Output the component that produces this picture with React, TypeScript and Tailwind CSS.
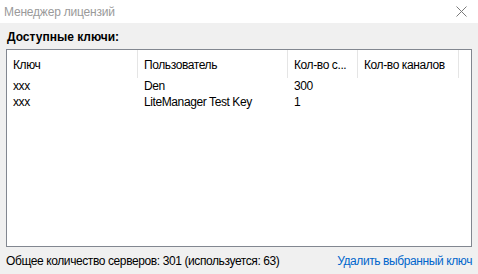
const columns = [
  { title: 'Ключ', width: 'w-[131px]' },
  { title: 'Пользователь', width: 'w-[150px]' },
  { title: 'Кол-во с...', width: 'w-[70px]' },
  { title: 'Кол-во каналов', width: 'w-[101px]' },
]

const rows = [
  ['xxx', 'Den', '300', ''],
  ['xxx', 'LiteManager Test Key', '1', ''],
]

const widths = ['w-[131px]', 'w-[150px]', 'w-[70px]', 'w-[101px]']

const App = () => {
  return (
    <div className="flex h-[274px] w-[478px] flex-col bg-[#f0f0f0] text-[12px] tracking-[-0.4px] text-black [font-family:'Liberation_Sans','Noto_Sans',sans-serif]">
      <div className="flex h-[23px] items-center justify-between bg-white pl-[4px] pr-[11px]">
        <span className="text-[12px] tracking-[-0.2px] text-[#9a9a9a]">Менеджер лицензий</span>
        <svg width="11" height="11" viewBox="0 0 11 11" className="text-[#7a7a7a]">
          <path d="M0.5 0.5 L10.5 10.5 M10.5 0.5 L0.5 10.5" stroke="currentColor" strokeWidth="1" />
        </svg>
      </div>
      <div className="flex flex-1 flex-col px-[6px]">
        <div className="flex h-[26px] items-end pb-[3px] pl-[1px] font-bold tracking-normal">Доступные ключи:</div>
        <div className="h-[198px] border border-[#828790] bg-white">
          <div className="flex h-[28px]">
            {columns.map((col) => (
              <div key={col.title} className={`${col.width} flex items-center border-r border-[#e5e5e5] pl-[6px] pt-[1px] whitespace-nowrap`}>
                {col.title}
              </div>
            ))}
          </div>
          {rows.map((row, i) => (
            <div key={i} className="flex h-[16px] items-center">
              {row.map((cell, j) => (
                <div key={j} className={`${widths[j]} pl-[6px] whitespace-nowrap`}>
                  {cell}
                </div>
              ))}
            </div>
          ))}
        </div>
        <div className="flex flex-1 items-center justify-between pt-[1px]">
          <span>Общее количество серверов: 301 (используется: 63)</span>
          <span className="text-[#0066cc]">Удалить выбранный ключ</span>
        </div>
      </div>
    </div>
  )
}

export default App
